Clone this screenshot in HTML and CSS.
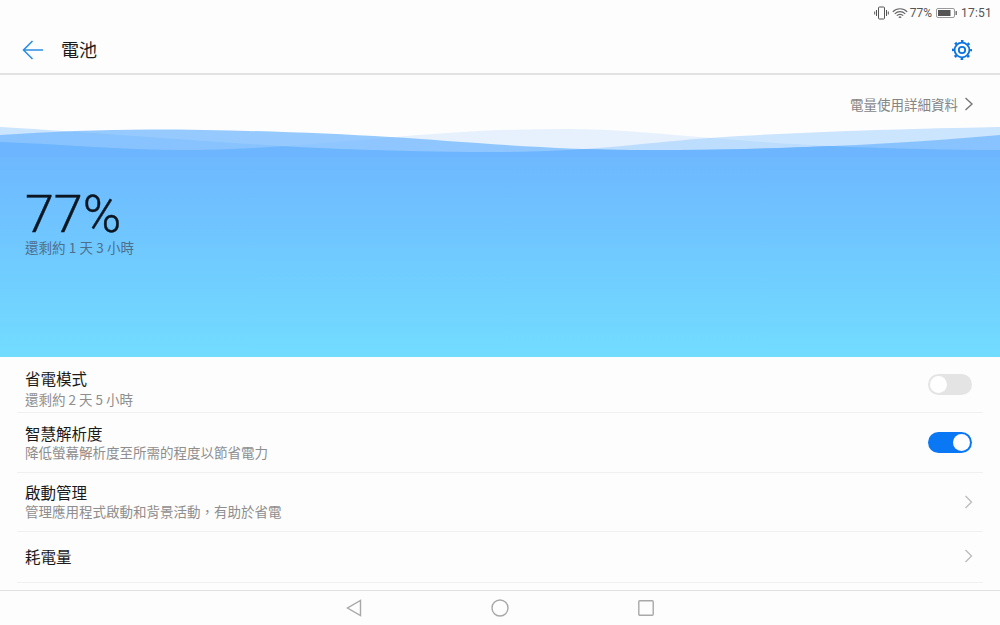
FILE: index.html
```html
<!DOCTYPE html>
<html lang="zh-Hant">
<head>
    <meta charset="UTF-8" />
    <title>電池</title>
    <link rel="stylesheet" href="styles.css">
</head>
<body>
    <div class="status-bar">
        <svg class="icon-vibrate" width="15" height="14" viewBox="0 0 15 14">
            <rect x="4.500" y="1" width="6" height="12" rx="1" />
            <path d="M2.500 4v6M.7 5.500v3M12.500 4v6M14.300 5.500v3" />
        </svg>
        <svg class="icon-wifi" width="16" height="12" viewBox="0 0 16 12">
            <path d="M.8 4.800a10 10 0 0 1 14.400 0" />
            <path d="M2.800 6.800a7.200 7.200 0 0 1 10.400 0" />
            <path d="M4.800 8.700a4.400 4.400 0 0 1 6.400 0" />
            <path d="M6.800 10.600a1.700 1.700 0 0 1 2.400 0" />
        </svg>
        <span class="status-percent">77%</span>
        <svg class="icon-battery" width="21" height="10" viewBox="0 0 21 10">
            <rect x=".5" y=".5" width="18" height="9" rx="1.5" fill="#fff" stroke="#999" />
            <rect x="2" y="2" width="12.5" height="6" fill="#555" />
            <rect x="19.5" y="3" width="1.5" height="4" fill="#777" />
        </svg>
        <span class="status-time">17:51</span>
    </div>

    <header class="title-bar">
        <svg class="back-arrow" width="22" height="20" viewBox="0 0 22 20">
            <path d="M21 10H2M10.500 1L1.500 10l9 9" />
        </svg>
        <h1>電池</h1>
        <svg class="gear" width="22" height="22" viewBox="0 0 22 22">
            <circle cx="11" cy="11" r="7.400" />
            <circle class="gear-teeth" cx="11" cy="11" r="9" />
            <circle cx="11" cy="11" r="3.200" />
        </svg>
    </header>

    <div class="usage-link">
        <span>電量使用詳細資料</span>
        <svg class="chevron-dark" width="10" height="14" viewBox="0 0 10 14">
            <path d="M1.500 1l6.500 6-6.500 6" />
        </svg>
    </div>

    <svg class="waves" width="1000" height="30" viewBox="0 0 1000 30" preserveAspectRatio="none">
        <defs>
            <path id="waveA" d="M0 15C60 17 120 23 180 23C260 23 320 16 390 10.500C440 6 500 2 560 2C620 2 660 7 700 10C760 15 840 22 1000 23V30H0Z" />
            <path id="waveB" d="M0 8C50 5 100 2.600 150 2.600C240 2.600 320 6 390 10C460 14 540 23 650 23C780 23 900 17 1000 8V30H0Z" />
            <path id="waveC" d="M0 0C100 6 200 14 280 19C350 23 430 25 500 25C590 25 650 15 716 10.500C800 5 900 2 1000 0V30H0Z" />
            <clipPath id="clipA"><use href="#waveA" /></clipPath>
            <clipPath id="clipB"><use href="#waveB" /></clipPath>
            <clipPath id="clipC"><use href="#waveC" /></clipPath>
        </defs>
        <use href="#waveA" fill="#6db5ff" fill-opacity=".16" />
        <use href="#waveC" fill="#6db5ff" fill-opacity=".34" />
        <use href="#waveB" fill="#6db5ff" fill-opacity=".72" />
        <g clip-path="url(#clipA)">
            <g clip-path="url(#clipB)">
                <rect width="1000" height="30" fill="#6db5ff" clip-path="url(#clipC)" />
            </g>
        </g>
    </svg>

    <section class="hero">
        <div class="hero-percent">77%</div>
        <div class="hero-remaining">還剩約 1 天 3 小時</div>
    </section>

    <ul class="list">
        <li class="row row-saver">
            <div class="row-text">
                <div class="row-title">省電模式</div>
                <div class="row-sub">還剩約 2 天 5 小時</div>
            </div>
            <span class="toggle"></span>
        </li>
        <li class="row row-res">
            <div class="row-text">
                <div class="row-title">智慧解析度</div>
                <div class="row-sub">降低螢幕解析度至所需的程度以節省電力</div>
            </div>
            <span class="toggle on"></span>
        </li>
        <li class="row row-start">
            <div class="row-text">
                <div class="row-title">啟動管理</div>
                <div class="row-sub">管理應用程式啟動和背景活動，有助於省電</div>
            </div>
            <svg class="chevron" width="10" height="14" viewBox="0 0 10 14">
                <path d="M1.500 1l6 6-6 6" />
            </svg>
        </li>
        <li class="row row-usage">
            <div class="row-text">
                <div class="row-title">耗電量</div>
            </div>
            <svg class="chevron" width="10" height="14" viewBox="0 0 10 14">
                <path d="M1.500 1l6 6-6 6" />
            </svg>
        </li>
    </ul>

    <nav class="nav-bar">
        <svg width="16" height="18" viewBox="0 0 16 18">
            <path d="M14.500 1.500v15L1.500 9z" />
        </svg>
        <svg width="18" height="18" viewBox="0 0 18 18">
            <circle cx="9" cy="9" r="8" />
        </svg>
        <svg width="16" height="16" viewBox="0 0 16 16">
            <rect x=".8" y=".8" width="14.400" height="14.400" rx="1" />
        </svg>
    </nav>
</body>
</html>
```

FILE: styles.css
```css
html {
    box-sizing: border-box;
}

*, *:before, *:after {
    box-sizing: inherit;
}

body {
    margin: 0;
    width: 1000px;
    height: 625px;
    overflow: hidden;
    background-color: #fdfdfd;
    font-family: "Noto Sans CJK TC", Roboto, sans-serif;
    color: #1a1a1a;
}

svg {
    display: block;
    flex: none;
}

.status-bar {
    height: 25px;
    padding-right: 8px;
    display: flex;
    justify-content: flex-end;
    align-items: center;
    font-family: Roboto, sans-serif;
    font-size: 12px;
    color: #555;
}

.icon-vibrate {
    margin-right: 3px;
    fill: none;
    stroke: #555;
    stroke-width: 1;
}

.icon-wifi {
    margin-right: 2px;
    fill: none;
    stroke: #666;
    stroke-width: 1.200;
}

.status-percent {
    margin-right: 4px;
}

.status-time {
    margin-left: 4px;
    letter-spacing: .2px;
}

.title-bar {
    height: 50px;
    padding: 1px 27px 0 22px;
    display: flex;
    align-items: center;
    border-bottom: 2px solid #e2e2e2;
}

.title-bar h1 {
    margin: -1px 0 0 17px;
    flex: 1;
    font-size: 18px;
    font-weight: 400;
}

.back-arrow {
    fill: none;
    stroke: #2c8fe6;
    stroke-width: 1.600;
}

.gear {
    fill: none;
    stroke: #0a73e0;
    stroke-width: 1.800;
}

.gear .gear-teeth {
    stroke-width: 2;
    stroke-dasharray: 2.600 4.469;
    stroke-dashoffset: 1.300;
}

.usage-link {
    height: 52px;
    padding: 5px 26px 0 0;
    display: flex;
    justify-content: flex-end;
    align-items: center;
    font-size: 13.500px;
    color: #858585;
}

.usage-link span {
    margin-right: 6px;
}

.chevron-dark {
    fill: none;
    stroke: #777;
    stroke-width: 1.400;
}

.waves {
    width: 1000px;
    height: 30px;
}

.hero {
    height: 200px;
    padding: 35px 25px 0;
    background: linear-gradient(#6eb8ff, #72dcff);
}

.hero-percent {
    font-family: Roboto, sans-serif;
    font-size: 52px;
    font-weight: 300;
    line-height: 46px;
    color: #0c1620;
    -webkit-text-stroke: .4px #0c1620;
}

.hero-remaining {
    font-size: 13.500px;
    line-height: 18px;
    word-spacing: .2px;
    color: #4d6f8c;
}

.list {
    margin: 0 17px;
    padding: 0;
    list-style: none;
}

.row {
    padding: 0 10px 0 8px;
    display: flex;
    justify-content: space-between;
    align-items: center;
    border-bottom: 1px solid #f0f0f0;
}

.row-saver {
    height: 56px;
    padding-top: 7px;
}

.row-saver .row-sub {
    margin-top: 2px;
}

.row-saver .toggle {
    margin: -7px 1px 0 0;
}

.row-res,
.row-start {
    height: 59.500px;
}

.row-res .toggle {
    margin-right: 1px;
}

.row-usage {
    height: 51px;
    padding-bottom: 2px;
}

.row-title {
    font-size: 15.500px;
    line-height: 20px;
}

.row-sub {
    font-size: 13.500px;
    line-height: 19px;
    color: #8e8e8e;
}

.toggle {
    width: 44px;
    height: 21px;
    padding: 2px;
    display: flex;
    background-color: #e4e4e4;
    border-radius: 11px;
}

.toggle:before {
    content: "";
    width: 17px;
    height: 17px;
    background-color: #fff;
    border-radius: 50%;
}

.toggle.on {
    justify-content: flex-end;
    background-color: #0a78f5;
}

.chevron {
    margin-right: -1px;
    fill: none;
    stroke: #bdbdbd;
    stroke-width: 1.400;
}

.nav-bar {
    margin-top: 7px;
    height: 35px;
    padding-left: 346px;
    display: flex;
    align-items: center;
    gap: 129px;
    border-top: 1px solid #e2e2e2;
    fill: none;
    stroke: #a8a8a8;
    stroke-width: 1.400;
}
```
